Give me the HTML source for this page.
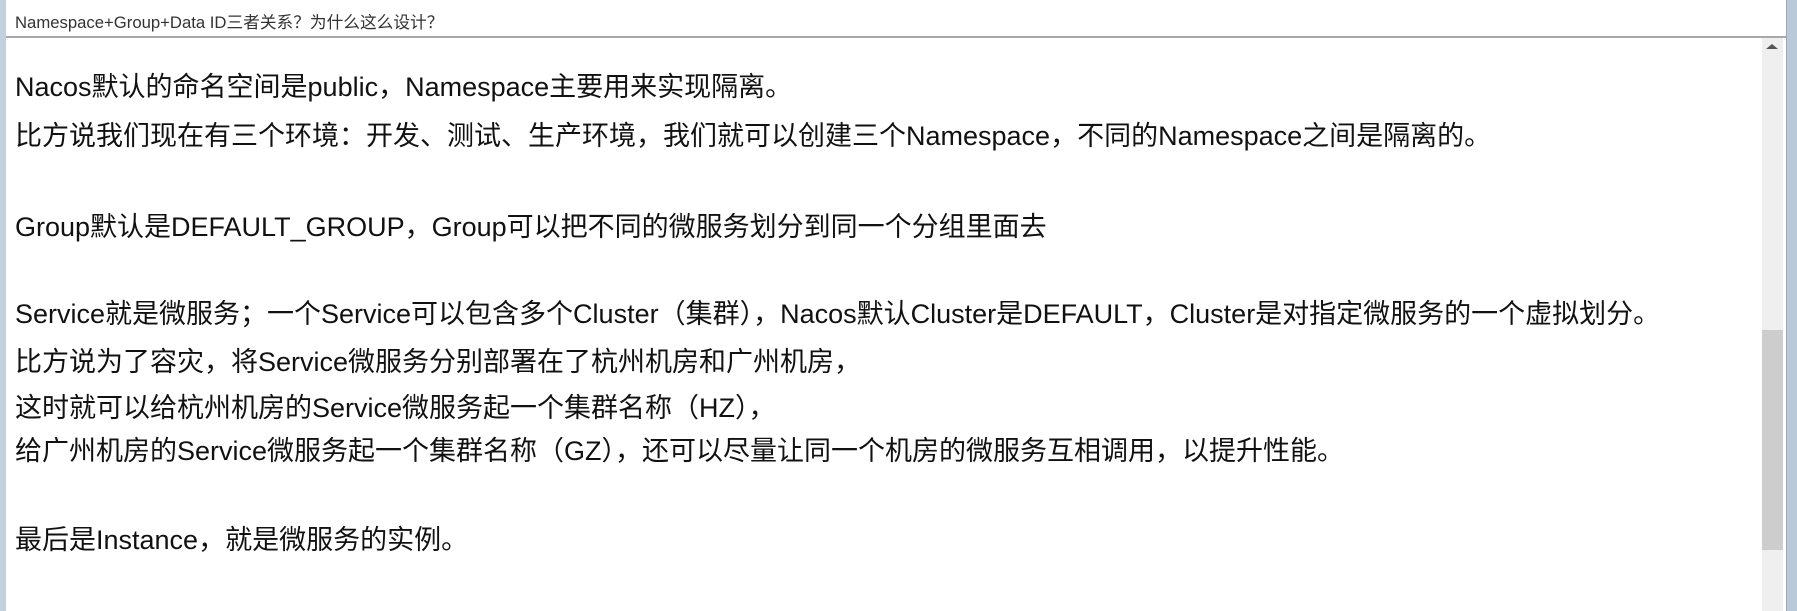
<!DOCTYPE html>
<html><head><meta charset="utf-8"><style>
body{margin:0;width:1797px;height:611px;overflow:hidden;background:#fff;position:relative;font-family:"Liberation Sans","Noto Sans CJK SC",sans-serif;color:#111}
.lb{position:absolute;left:0;top:0;width:6px;height:611px;background:#c3d0de}
.rb{position:absolute;left:1786px;top:0;width:11px;height:611px;background:#b9c9d9;border-left:1px solid #9aa9b8}
.hd{position:absolute;left:6px;top:0;width:1780px;height:36px;border-bottom:2px solid #a8a8a8;background:#fff}
.hd span{position:absolute;left:9px;top:9px;font-size:16.7px;color:#333}
.sb{position:absolute;left:1762px;top:38px;width:21px;height:573px;background:#efefef}
.th{position:absolute;left:1762px;top:330px;width:21px;height:220px;background:#cdcdcd}
.ar{position:absolute;left:1766px;top:44px;width:0;height:0;border-left:6px solid transparent;border-right:6px solid transparent;border-bottom:5px solid #555}
.l{position:absolute;left:15px;font-size:27px;white-space:nowrap;line-height:30px}
</style></head><body>
<div class="lb"></div>
<div class="hd"><span>Namespace+Group+Data ID三者关系？为什么这么设计？</span></div>
<div class="sb"></div><div class="th"></div><div class="ar"></div>
<div class="rb"></div>
<div class="l" style="top:72px">Nacos默认的命名空间是public，Namespace主要用来实现隔离。</div>
<div class="l" style="top:121px">比方说我们现在有三个环境：开发、测试、生产环境，我们就可以创建三个Namespace，不同的Namespace之间是隔离的。</div>
<div class="l" style="top:212px">Group默认是DEFAULT_GROUP，Group可以把不同的微服务划分到同一个分组里面去</div>
<div class="l" style="top:299px">Service就是微服务；一个Service可以包含多个Cluster（集群），Nacos默认Cluster是DEFAULT，Cluster是对指定微服务的一个虚拟划分。</div>
<div class="l" style="top:347px">比方说为了容灾，将Service微服务分别部署在了杭州机房和广州机房，</div>
<div class="l" style="top:393px">这时就可以给杭州机房的Service微服务起一个集群名称（HZ），</div>
<div class="l" style="top:436px">给广州机房的Service微服务起一个集群名称（GZ），还可以尽量让同一个机房的微服务互相调用，以提升性能。</div>
<div class="l" style="top:525px">最后是Instance，就是微服务的实例。</div>
</body></html>
